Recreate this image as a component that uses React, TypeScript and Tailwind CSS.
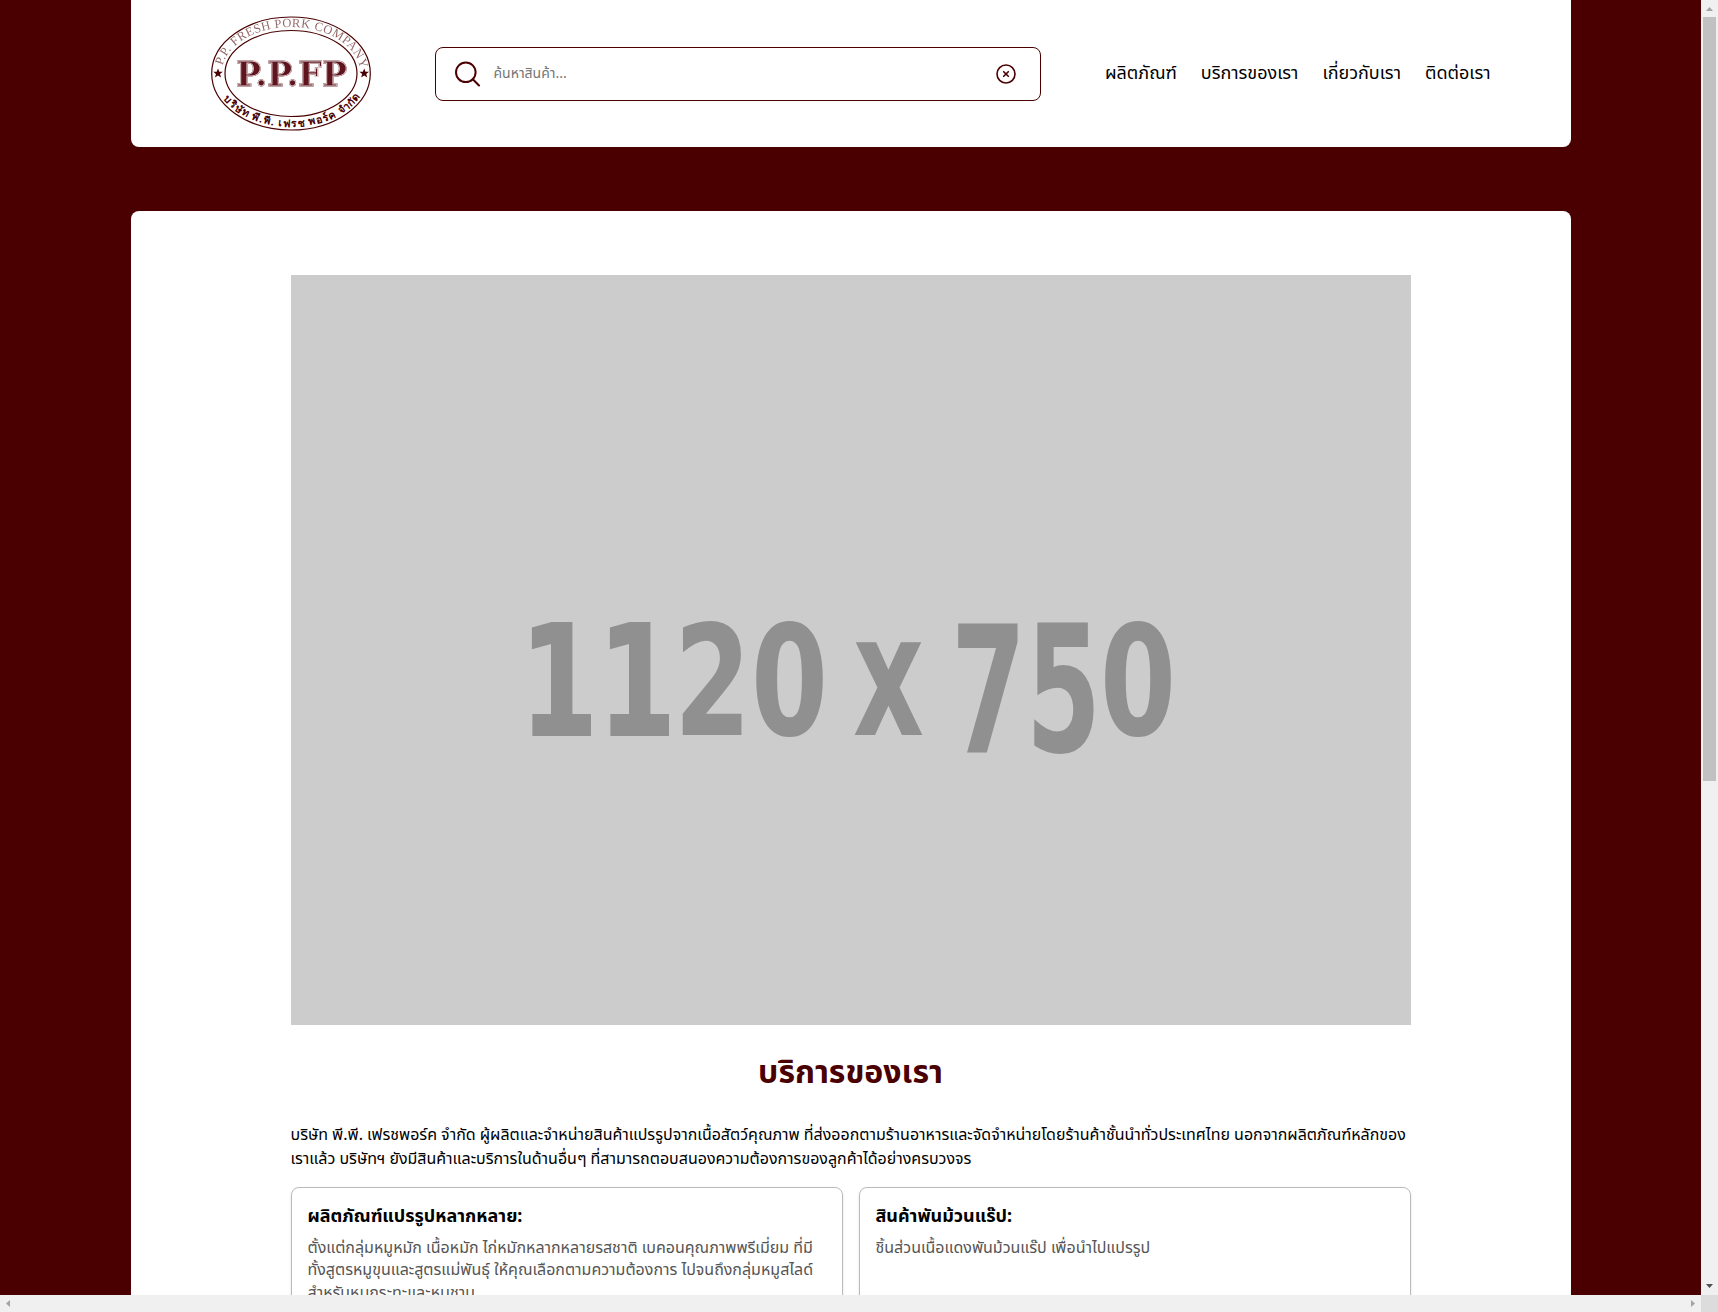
import React from "react";

const nav = ["ผลิตภัณฑ์", "บริการของเรา", "เกี่ยวกับเรา", "ติดต่อเรา"];

const cards = [
  {
    title: "ผลิตภัณฑ์แปรรูปหลากหลาย:",
    lines: [
      "ตั้งแต่กลุ่มหมูหมัก เนื้อหมัก ไก่หมักหลากหลายรสชาติ เบคอนคุณภาพพรีเมี่ยม ที่มี",
      "ทั้งสูตรหมูขุนและสูตรแม่พันธุ์ ให้คุณเลือกตามความต้องการ ไปจนถึงกลุ่มหมูสไลด์",
      "สำหรับหมูกระทะและหมูชาบู",
    ],
  },
  {
    title: "สินค้าพันม้วนแร๊ป:",
    lines: ["ชิ้นส่วนเนื้อแดงพันม้วนแร๊ป เพื่อนำไปแปรรูป"],
  },
];

function Logo() {
  return (
    <svg viewBox="0 0 160 115" className="h-[115px] w-40 shrink-0" fill="#4a0000">
      <defs>
        <path id="arc-top" d="M10.500 57.500 A69.500 46.500 0 0 1 149.500 57.500" />
        <path id="arc-bottom" d="M3 57.500 A77 53.500 0 0 0 157 57.500" />
      </defs>
      <g fill="none" stroke="#4a0000" strokeWidth="1.2">
        <ellipse cx="80" cy="57.500" rx="79.300" ry="56.500" />
        <ellipse cx="80" cy="57.500" rx="66" ry="43" />
      </g>
      <text fontFamily="Liberation Serif" fontSize="12.500" opacity="0.6">
        <textPath href="#arc-top" startOffset="8" textLength="171">P.P. FRESH PORK COMPANY</textPath>
      </text>
      <text fontFamily="Noto Sans, sans-serif" fontWeight="700" fontSize="10.500">
        <textPath href="#arc-bottom" startOffset="28" textLength="154">บริษัท พี.พี. เฟรช พอร์ค จำกัด</textPath>
      </text>
      <text
        x="25"
        y="70"
        textLength="111"
        lengthAdjust="spacingAndGlyphs"
        fontFamily="DejaVu Serif"
        fontWeight="700"
        fontSize="34"
        fill="#5f141e"
        stroke="#dccbcd"
        strokeWidth="1"
        className="drop-shadow-[0_0_0.7px_#4a0000]"
      >
        P.P.FP
      </text>
      <path d="M7 52.500l1.300 3.300h3.500l-2.800 2.200 1.100 3.400L7 59.400l-3.100 2 1.100-3.400-2.800-2.200h3.500z" />
      <path d="M153.200 52.500l1.300 3.300h3.500l-2.800 2.200 1.100 3.400-3.100-2-3.100 2 1.100-3.400-2.800-2.200h3.500z" />
    </svg>
  );
}

function Placeholder() {
  return (
    <svg viewBox="0 0 1120 750" className="block h-[750px] w-[1120px] bg-[#cccccc]" fill="#909090" fontFamily="DejaVu Sans" fontWeight="700">
      <text x="229" y="460" fontSize="153" textLength="156" lengthAdjust="spacingAndGlyphs" stroke="#909090" strokeWidth="2">11</text>
      <text x="383" y="460" fontSize="153" textLength="154" lengthAdjust="spacingAndGlyphs">20</text>
      <text x="562" y="460" fontSize="170" textLength="71" lengthAdjust="spacingAndGlyphs">x</text>
      <text x="660" y="477" fontSize="177" textLength="150" lengthAdjust="spacingAndGlyphs">75</text>
      <text x="809" y="460" fontSize="153" textLength="76" lengthAdjust="spacingAndGlyphs">0</text>
    </svg>
  );
}

export default function App() {
  return (
    <div className="grid h-[1312px] w-[1718px] grid-cols-[1fr_17px] grid-rows-[minmax(0,1fr)_17px] overflow-hidden bg-[#f0f0f0] font-['Noto_Sans','Noto_Sans_Thai',sans-serif] text-black">
      <div className="flex flex-col items-center overflow-hidden bg-[#4a0000]">
        <header className="flex h-[147px] w-[1440px] shrink-0 items-center rounded-b-lg bg-white px-20">
          <Logo />
          <div className="ml-16 flex h-[54px] w-[606px] items-center rounded-lg border border-[#4a0000] pr-6 pl-[18px]">
            <svg viewBox="0 0 26 26" className="size-[26px]" fill="none" stroke="#4a0000" strokeWidth="2" strokeLinecap="round">
              <circle cx="11.800" cy="11.300" r="9.800" />
              <path d="M18.800 18.300L25 24.500" />
            </svg>
            <span className="ml-3.5 grow pb-0.5 text-sm text-[#757575]">ค้นหาสินค้า...</span>
            <svg viewBox="0 0 20 20" className="size-5" fill="none" stroke="#4a0000" strokeWidth="1.6" strokeLinecap="round">
              <circle cx="10" cy="10" r="9" />
              <path d="M7.700 7.700l4.600 4.600M12.300 7.700l-4.600 4.600" />
            </svg>
          </div>
          <nav className="ml-auto flex gap-6 pb-[3px] text-lg whitespace-nowrap">
            {nav.map((n) => (
              <a key={n}>{n}</a>
            ))}
          </nav>
        </header>

        <main className="mt-16 flex w-[1440px] shrink-0 flex-col rounded-t-lg bg-white px-40 pt-16">
          <Placeholder />
          <h1 className="mt-[22px] text-center text-[32px] leading-[48px] font-bold text-[#4a0000]">บริการของเรา</h1>
          <p className="mt-[27px] text-base leading-6 whitespace-nowrap">
            บริษัท พี.พี. เฟรชพอร์ค จำกัด ผู้ผลิตและจำหน่ายสินค้าแปรรูปจากเนื้อสัตว์คุณภาพ ที่ส่งออกตามร้านอาหารและจัดจำหน่ายโดยร้านค้าชั้นนำทั่วประเทศไทย นอกจากผลิตภัณฑ์หลักของ
            <br />
            เราแล้ว บริษัทฯ ยังมีสินค้าและบริการในด้านอื่นๆ ที่สามารถตอบสนองความต้องการของลูกค้าได้อย่างครบวงจร
          </p>
          <div className="mt-[17px] grid grid-cols-2 gap-4">
            {cards.map((c) => (
              <section key={c.title} className="h-[150px] rounded-lg border border-[#bbbbbb] px-4 pt-3.5 shadow-sm">
                <h2 className="text-lg leading-[27px] font-bold">{c.title}</h2>
                <p className="mt-[7px] text-base leading-[22.4px] whitespace-nowrap text-[#555555]">
                  {c.lines.map((l) => (
                    <span key={l} className="block">{l}</span>
                  ))}
                </p>
              </section>
            ))}
          </div>
        </main>
      </div>

      <div className="flex flex-col items-center bg-[#f0f0f0]">
        <svg viewBox="0 0 17 17" className="size-[17px]" fill="#a3a3a3"><path d="M5 11h7L8.500 7z" /></svg>
        <div className="h-[764px] w-[13px] bg-[#c1c1c1]" />
        <svg viewBox="0 0 17 17" className="mt-auto size-[17px]" fill="#505050"><path d="M5 6h7L8.500 10z" /></svg>
      </div>
      <div className="flex justify-between bg-[#f0f0f0]">
        <svg viewBox="0 0 17 17" className="size-[17px]" fill="#a3a3a3"><path d="M10 5v7L6 8.500z" /></svg>
        <svg viewBox="0 0 17 17" className="size-[17px]" fill="#a3a3a3"><path d="M7 5v7l4-3.500z" /></svg>
      </div>
      <div className="bg-[#dcdcdc]" />
    </div>
  );
}
